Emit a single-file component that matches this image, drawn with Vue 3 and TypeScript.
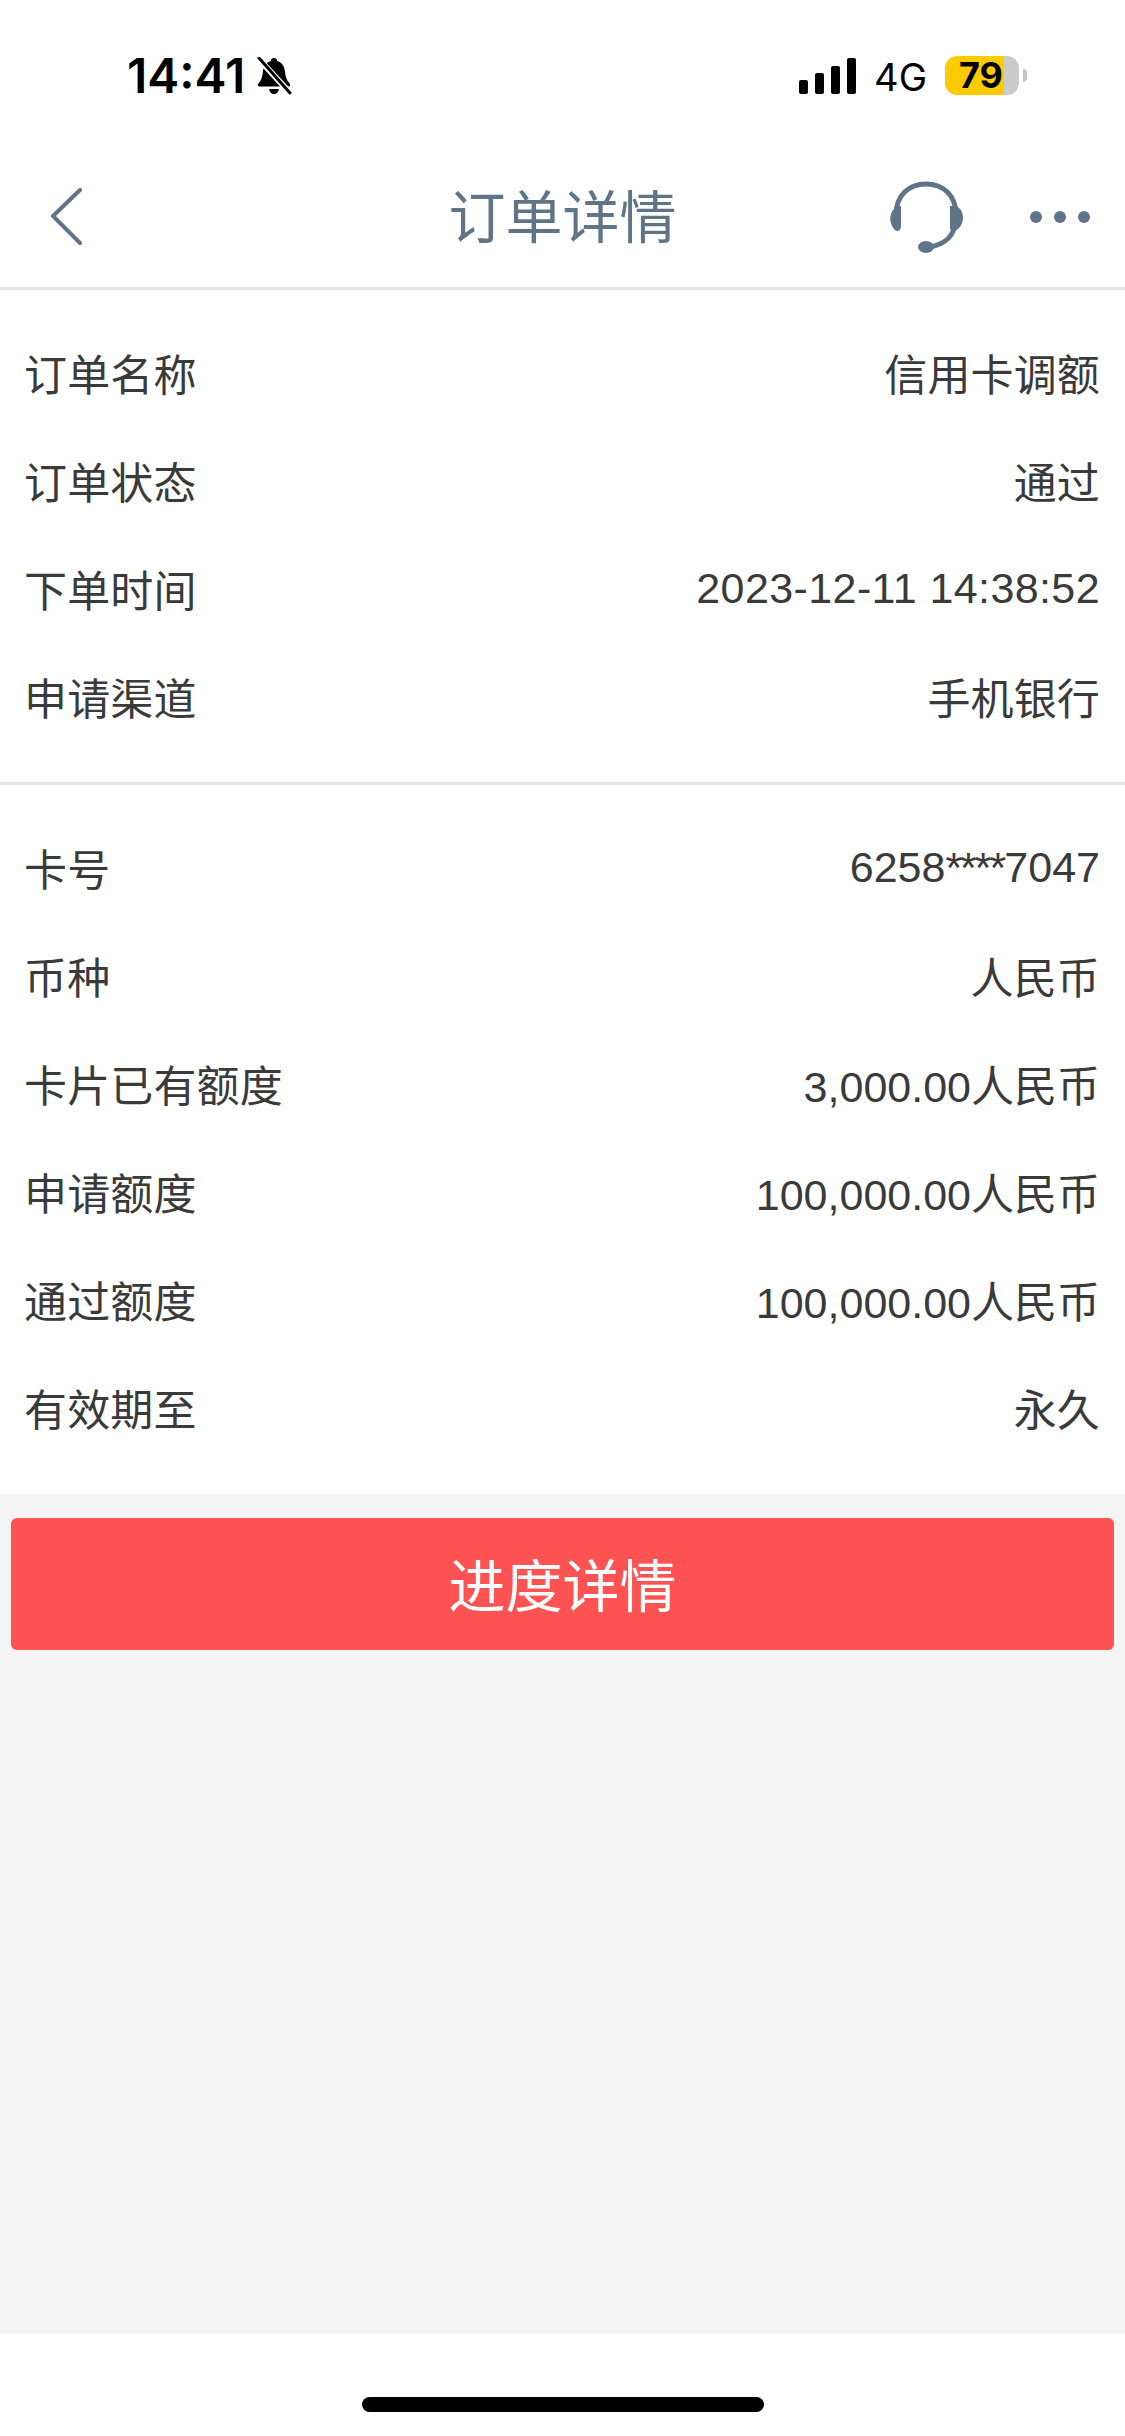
<template>
  <div class="page">
    <header class="top">
      <div class="status-bar">
        <div class="status-left">
          <span class="time">14:41</span>
          <svg class="bell" viewBox="0 0 36 38">
            <path d="M18 1c1.800 0 3 1.200 3.200 3 5 1.400 7.300 5.500 7.800 11 .4 5 1.800 8.500 4.800 11.800.9 1 .4 2.700-1.300 2.700H3.500c-1.700 0-2.200-1.700-1.300-2.700C5.200 23.500 6.400 20 6.900 15c.5-5.500 2.900-9.600 7.900-11C15 2.200 16.200 1 18 1z" fill="#000" />
            <path d="M13 32h10c-.4 3-2.500 5-5 5s-4.600-2-5-5z" fill="#000" />
            <path d="M2 1l32 35" stroke="#fff" stroke-width="6" />
            <path d="M3 1l31 35" stroke="#000" stroke-width="3" stroke-linecap="round" />
          </svg>
        </div>
        <div class="status-right">
          <svg class="signal" viewBox="0 0 57 36">
            <rect x="0" y="22" width="9" height="14" rx="2" />
            <rect x="16" y="15" width="9" height="21" rx="2" />
            <rect x="32" y="8" width="9" height="28" rx="2" />
            <rect x="48" y="0" width="9" height="36" rx="2" />
          </svg>
          <span class="network">4G</span>
          <div class="battery">
            <div class="battery-body" :style="{ background: batteryFill }">{{ battery }}</div>
            <span class="battery-tip"></span>
          </div>
        </div>
      </div>
      <nav class="nav">
        <button class="nav-back" aria-label="back">
          <svg viewBox="0 0 32 58" fill="none" stroke="#5f7587" stroke-width="4" stroke-linecap="round" stroke-linejoin="round">
            <path d="M30 2L3 28l27 27" />
          </svg>
        </button>
        <h1 class="nav-title">订单详情</h1>
        <div class="nav-actions">
          <svg class="headset" viewBox="0 0 74 72">
            <path d="M7 34C7 14 20 3 37 3s30 11 30 31" fill="none" stroke="#5f7587" stroke-width="5" />
            <path d="M66 40c0 14-9 23-25 26" fill="none" stroke="#5f7587" stroke-width="5" />
            <path d="M12 25v20c0 6-5 6-7 3-5-6-5-15 0-20 2-2 7-3 7-3z" fill="#5f7587" />
            <path d="M61 25v22c0 3 3 3 5 3 9-4 11-18 3-24-2-1.500-8-1-8-1z" fill="#5f7587" />
            <ellipse cx="37" cy="66" rx="8" ry="6" fill="#5f7587" />
          </svg>
          <div class="dots">
            <span></span><span></span><span></span>
          </div>
        </div>
      </nav>
    </header>

    <main class="content">
      <section class="group group-first">
        <div v-for="row in orderRows" :key="row.label" class="row">
          <span>{{ row.label }}</span>
          <span :class="row.valueClass">{{ row.value }}</span>
        </div>
      </section>
      <section class="group group-second">
        <div class="row">
          <span>卡号</span>
          <span class="value-tight">6258<span class="mask">****</span>7047</span>
        </div>
        <div v-for="row in cardRows" :key="row.label" class="row">
          <span>{{ row.label }}</span>
          <span :class="row.valueClass">{{ row.value }}</span>
        </div>
      </section>
      <div class="action">
        <button class="action-btn">进度详情</button>
      </div>
    </main>

    <footer class="home">
      <span class="home-bar"></span>
    </footer>
  </div>
</template>

<script setup lang="ts">
interface Row {
  label: string
  value: string
  valueClass?: string
}

const battery = 79
const batteryFill = `linear-gradient(to right, #fecb00 ${battery + 1}%, #cbcbcb ${battery + 1}%)`

const orderRows: Row[] = [
  { label: '订单名称', value: '信用卡调额' },
  { label: '订单状态', value: '通过' },
  { label: '下单时间', value: '2023-12-11 14:38:52', valueClass: 'value-wide' },
  { label: '申请渠道', value: '手机银行' },
]

const cardRows: Row[] = [
  { label: '币种', value: '人民币' },
  { label: '卡片已有额度', value: '3,000.00人民币', valueClass: 'value-tight' },
  { label: '申请额度', value: '100,000.00人民币', valueClass: 'value-tight' },
  { label: '通过额度', value: '100,000.00人民币', valueClass: 'value-tight' },
  { label: '有效期至', value: '永久' },
]
</script>

<style>
html,
body {
  margin: 0;
  background: #fff;
}
</style>

<style scoped>
.page {
  width: 1125px;
  height: 2436px;
  display: flex;
  flex-direction: column;
  background: #fff;
  font-family: "Liberation Sans", "Noto Sans CJK SC", sans-serif;
  overflow: hidden;
}

.top {
  height: 290px;
  flex-shrink: 0;
  border-bottom: 3px solid #e3e3e3;
  box-sizing: border-box;
}

.status-bar {
  height: 132px;
  display: flex;
  justify-content: space-between;
  padding: 52px 98px 0 127px;
  box-sizing: border-box;
}

.status-left {
  display: flex;
  align-items: flex-start;
  gap: 11px;
}

.time {
  font-family: Inter, "Liberation Sans", sans-serif;
  font-size: 48px;
  font-weight: 600;
  line-height: 48px;
  color: #000;
}

.bell {
  width: 36px;
  height: 38px;
  margin-top: 5px;
}

.status-right {
  display: flex;
  align-items: flex-start;
  padding-top: 4px;
}

.signal {
  width: 57px;
  height: 36px;
  margin-top: 2px;
}

.network {
  margin-left: 18px;
  font-family: Inter, "Liberation Sans", sans-serif;
  font-size: 38px;
  line-height: 42px;
  color: #000;
}

.battery {
  display: flex;
  align-items: center;
  margin-left: 18px;
}

.battery-body {
  width: 74px;
  height: 39px;
  padding-left: 14px;
  box-sizing: border-box;
  border-radius: 12px;
  font-family: Inter, "Liberation Sans", sans-serif;
  font-size: 36px;
  font-weight: 700;
  line-height: 39px;
  color: #000;
}

.battery-tip {
  width: 4px;
  height: 13px;
  margin-left: 4px;
  border-radius: 0 6px 6px 0;
  background: #c4c4c4;
}

.nav {
  position: relative;
  height: 155px;
  display: flex;
  align-items: center;
  justify-content: space-between;
  padding: 14px 35px 0 49px;
  box-sizing: border-box;
}

.nav-back {
  width: 34px;
  height: 58px;
  padding: 0;
  border: 0;
  background: none;
}

.nav-back svg {
  display: block;
  width: 34px;
  height: 58px;
}

.nav-title {
  position: absolute;
  left: 0;
  right: 0;
  top: 0;
  margin: 0;
  font-size: 57px;
  font-weight: 400;
  line-height: 172px;
  text-align: center;
  color: #5f7587;
}

.nav-actions {
  display: flex;
  align-items: center;
  gap: 67px;
}

.headset {
  width: 74px;
  height: 72px;
}

.dots {
  display: flex;
  gap: 12px;
}

.dots span {
  width: 12px;
  height: 12px;
  border-radius: 50%;
  background: #5f7587;
}

.content {
  flex: 1;
  background: #f4f4f4;
}

.group {
  background: #fff;
  padding: 28px 25px 0 24px;
}

.group-first {
  height: 495px;
  box-sizing: border-box;
  border-bottom: 3px solid #e3e3e3;
}

.group-second {
  height: 709px;
  box-sizing: border-box;
}

.row {
  height: 108px;
  display: flex;
  align-items: center;
  justify-content: space-between;
  font-size: 43px;
  letter-spacing: 0.15px;
  color: #3a3a3a;
}

.value-wide {
  letter-spacing: 0.4px;
}

.value-tight {
  letter-spacing: 0;
}

.mask {
  letter-spacing: -2px;
}

.action {
  padding: 24px 11px 0;
}

.action-btn {
  display: block;
  width: 100%;
  height: 132px;
  padding: 0 0 4px;
  border: 0;
  border-radius: 6px;
  background: #ff5252;
  color: #fff;
  font-family: inherit;
  font-size: 57px;
}

.home {
  height: 102px;
  flex-shrink: 0;
  display: flex;
  justify-content: center;
  padding-top: 63px;
  box-sizing: border-box;
  background: #fff;
}

.home-bar {
  width: 402px;
  height: 15px;
  border-radius: 8px;
  background: #000;
}
</style>
